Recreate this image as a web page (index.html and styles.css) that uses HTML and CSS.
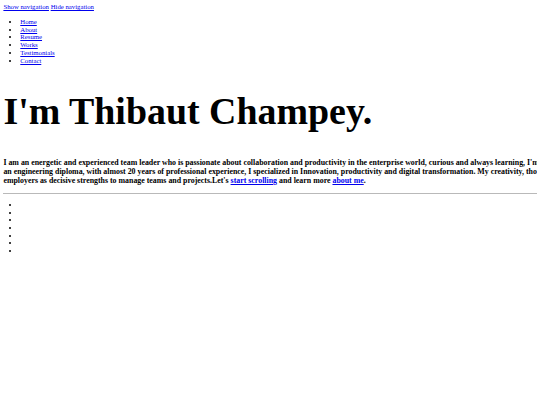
FILE: index.html
```html
<!DOCTYPE html>
<html lang="en">
<head>
<meta charset="utf-8">
<title>Thibaut Champey</title>
<link rel="stylesheet" href="styles.css">
</head>
<body>
<nav class="nav">
  <a href="#nav">Show navigation</a> <a href="#">Hide navigation</a>
  <ul class="nav-list">
    <li><a href="#home">Home</a></li>
    <li><a href="#about">About</a></li>
    <li><a href="#resume">Resume</a></li>
    <li><a href="#works">Works</a></li>
    <li><a href="#testimonials">Testimonials</a></li>
    <li><a href="#contact">Contact</a></li>
  </ul>
</nav>
<header class="banner">
  <h1 class="title">I'm Thibaut Champey.</h1>
  <h3 class="intro">I am an energetic and experienced team leader who is passionate about collaboration and productivity in the enterprise world, curious and always learning, I'm holder of<br>an engineering diploma, with almost 20 years of professional experience, I specialized in Innovation, productivity and digital transformation. My creativity, thoroughness and pragmatism are recognized by my<br>employers as decisive strengths to manage teams and projects.Let's <a href="#about">start scrolling</a> and learn more <a href="#about">about me</a>.</h3>
  <hr class="rule">
  <ul class="social">
    <li></li>
    <li></li>
    <li></li>
    <li></li>
    <li></li>
    <li></li>
    <li></li>
  </ul>
</header>
</body>
</html>
```
FILE: styles.css
```css
html {
  background: #ffffff;
}
body {
  margin: 3.4px;
  font-family: "Liberation Serif", "Times New Roman", serif;
  font-size: 6.75px;
  line-height: 7.76px;
  color: #000000;
  overflow-x: hidden;
}
a {
  color: #0000ee;
}
.nav-list {
  margin: 6.75px 0;
  padding-left: 16.9px;
}
.title {
  font-size: 37.9px;
  line-height: 43px;
  font-weight: bold;
  margin: 25px 0;
}
.intro {
  font-size: 7.88px;
  line-height: 9.3px;
  font-weight: bold;
  color: #000000;
  margin: 8px 0;
  width: 700px;
  white-space: nowrap;
}
.rule {
  width: 700px;
  margin: 3.4px 0;
  border: 0;
  border-top: 1px solid #b9b9b9;
  height: 0;
}
.social {
  margin: 6.75px 0;
  padding-left: 16.9px;
}
.social li {
  height: 7.6px;
}
```
